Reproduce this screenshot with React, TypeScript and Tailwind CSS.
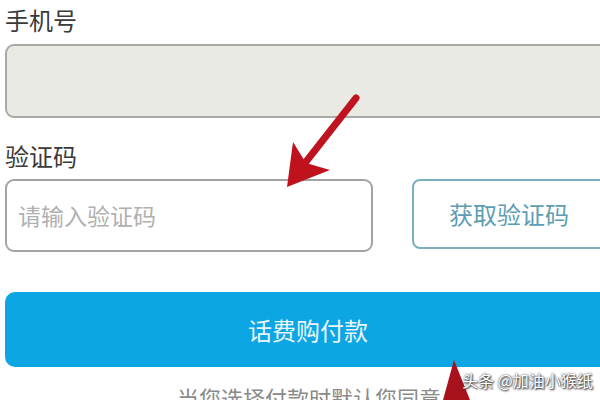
import React from "react";

export default function App() {
  const font = { fontFamily: '"Noto Sans CJK SC", "Noto Sans", sans-serif' };
  return (
    <div className="relative w-[600px] h-[400px] overflow-hidden bg-white" style={font}>
      <div className="w-[606px] pl-[5px] flex flex-col">
        <div className="h-[40px] flex items-center text-[24px] leading-none text-[#3a3a3a]">手机号</div>
        <div className="mt-[4px] h-[74px] w-[620px] shrink-0 rounded-[9px] border-2 border-[#a9a9a6] bg-[#eaeae5]" />
        <div className="h-[61px] flex items-end pb-[11px] text-[24px] leading-none text-[#3a3a3a]">验证码</div>
        <div className="flex gap-[39px] items-start">
          <div className="h-[73px] w-[368px] shrink-0 rounded-[9px] border-2 border-[#a3a3a3] bg-white flex items-center pl-[11px] text-[23px] text-[#b0b0b0]">
            请输入验证码
          </div>
          <div className="h-[70px] w-[220px] shrink-0 rounded-[8px] border-2 border-[#7aaebd] bg-white flex items-center pl-[35px] text-[24px] text-[#5d9db3] whitespace-nowrap">
            获取验证码
          </div>
        </div>
        <div className="mt-[40px] h-[75px] w-[606px] shrink-0 rounded-[10px] bg-[#0ba6e3] flex items-center justify-center text-[24px] text-[#eaf6fc]">
          话费购付款
        </div>
        <div className="pt-[19px] pl-[172px] text-[22px] leading-none text-[#8a8a8a] whitespace-nowrap">当您选择付款时默认您同意</div>
      </div>

      <svg className="absolute left-0 top-0" width="600" height="400" viewBox="0 0 600 400">
        <line x1="356" y1="98" x2="305" y2="163" stroke="#bf1420" strokeWidth="7" strokeLinecap="round" />
        <polygon points="287,187 293,142 306,163 330,170" fill="#c0121d" />
        <polygon points="454,360 443,400 470,400" fill="#a8121c" />
      </svg>
      <div
        className="absolute left-[462px] top-[372px] text-[16px] leading-none text-white whitespace-nowrap"
        style={{ textShadow: "0 0 2px #333, 1px 1px 2px #222" }}
      >
        头条 @加油小猴纸
      </div>
    </div>
  );
}
